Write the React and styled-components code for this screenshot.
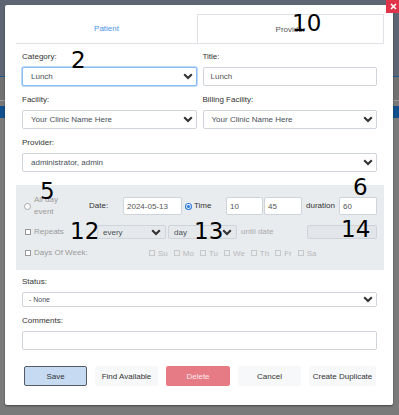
import styled, { createGlobalStyle } from 'styled-components'

const GlobalStyle = createGlobalStyle`
  html, body {
    margin: 0;
    padding: 0;
    height: 415px;
    overflow: hidden;
  }
  body {
    font-family: "Liberation Sans", Arial, sans-serif;
    background: linear-gradient(to bottom, #5f6673 0, #5f6673 76px, #1a5596 76px, #1a5596 77px, #717171 77px, #717171 100px, #999 100px, #999 101px, #777 101px, #777 106px, #134f8d 106px, #134f8d 118px, #7a7a7a 118px);
  }
`

const Page = styled.div`
  position: relative;
  width: 399px;
  height: 415px;
  padding: 5px 0 0 5px;
  box-sizing: border-box;
`

const Modal = styled.div`
  position: relative;
  width: 388px;
  height: 400px;
  background: #fff;
  border-radius: 2px;
  box-shadow: 0 1px 2px rgba(0, 0, 0, 0.45);
  padding: 9px 9px 0 11px;
  box-sizing: border-box;
`

const CloseButton = styled.div`
  position: absolute;
  top: -6px;
  right: -7px;
  width: 14px;
  height: 14px;
  background: #e0344b;
  display: flex;
  align-items: center;
  justify-content: center;
`

const Tabs = styled.div`
  display: grid;
  grid-template-columns: 181px 1fr;
  height: 30px;
  border-bottom: 1px solid #dee2e6;
  box-sizing: border-box;
`

const Tab = styled.div`
  display: flex;
  align-items: center;
  justify-content: center;
  font-size: 8px;
  color: ${(p) => (p.$active ? '#4d94ea' : '#555')};
  border: ${(p) => (p.$boxed ? '1px solid #dee2e6' : 'none')};
  border-bottom: none;
`

const Section = styled.div`
  padding: ${(p) => p.$pad || '7px 7px 0 6px'};
`

const Columns = styled.div`
  display: grid;
  grid-template-columns: 1fr 1fr;
  column-gap: 6px;
`

const Field = styled.div`
  margin-bottom: ${(p) => (p.$last ? '0' : '8px')};
`

const Label = styled.div`
  font-size: 8px;
  line-height: 12px;
  color: #333;
  margin-bottom: 4px;
`

const SelectBox = styled.div`
  height: ${(p) => p.$h || 19}px;
  width: ${(p) => (p.$w ? `${p.$w}px` : 'auto')};
  flex-shrink: 0;
  box-sizing: border-box;
  display: flex;
  align-items: center;
  justify-content: space-between;
  padding: 0 ${(p) => p.$pr ?? 3}px 0 ${(p) => p.$pl ?? 8}px;
  border: 1px solid ${(p) => (p.$focus ? '#86bdf5' : '#ced4da')};
  box-shadow: ${(p) => (p.$focus ? '0 0 0 1px rgba(80, 150, 230, 0.35)' : 'none')};
  border-radius: 2px;
  background: ${(p) => p.$bg || '#fff'};
  font-size: ${(p) => p.$fs || 8}px;
  color: #495057;
  margin-left: ${(p) => p.$ml || 0}px;
`

const TextBox = styled.div`
  height: ${(p) => p.$h || 19}px;
  width: ${(p) => (p.$w ? `${p.$w}px` : 'auto')};
  flex-shrink: 0;
  box-sizing: border-box;
  display: flex;
  align-items: center;
  padding-left: ${(p) => p.$pl ?? 7}px;
  border: 1px solid #ced4da;
  border-radius: 2px;
  background: ${(p) => p.$bg || '#fff'};
  font-size: 8px;
  color: #555;
  margin-left: ${(p) => p.$ml || 0}px;
`

const Panel = styled.div`
  margin-top: 13px;
  height: 85px;
  background: #e9ecef;
  padding: 12px 7px 0 8px;
  box-sizing: border-box;
`

const Row = styled.div`
  display: flex;
  align-items: center;
  height: ${(p) => p.$h}px;
  margin-top: ${(p) => p.$mt || 0}px;
`

const Group = styled.div`
  display: flex;
  align-items: center;
  width: ${(p) => p.$w}px;
  flex-shrink: 0;
  margin-left: ${(p) => p.$ml || 0}px;
`

const Text = styled.span`
  font-size: 8px;
  line-height: 12px;
  color: ${(p) => p.$color || '#333'};
  margin-left: ${(p) => p.$ml || 0}px;
`

const Radio = styled.span`
  width: 5px;
  height: 5px;
  border: 1px solid #a8a8a8;
  border-radius: 50%;
  background: #fff;
  flex-shrink: 0;
`

const Check = styled.span`
  width: 4px;
  height: 4px;
  border: 1px solid ${(p) => (p.$light ? '#c8c8c8' : '#9a9a9a')};
  background: ${(p) => (p.$light ? 'transparent' : '#fff')};
  flex-shrink: 0;
  margin-left: ${(p) => p.$ml || 0}px;
`

const Weekdays = styled.div`
  display: flex;
  align-items: center;
  gap: 6px;
`

const Day = styled.div`
  display: flex;
  align-items: center;
  gap: 3px;
  font-size: 8px;
  color: #b8b8b8;
`

const Buttons = styled.div`
  display: flex;
  gap: 8px;
  margin-top: 16px;
  padding-left: 2px;
`

const Button = styled.div`
  width: ${(p) => p.$w || 63}px;
  height: 20px;
  box-sizing: border-box;
  display: flex;
  align-items: center;
  justify-content: center;
  font-size: 8px;
  border-radius: 2px;
  color: ${(p) => (p.$variant === 'danger' ? '#fbe9eb' : '#333')};
  background: ${(p) =>
    p.$variant === 'primary' ? '#c6daf2' : p.$variant === 'danger' ? '#e67b85' : '#f7f8f9'};
  border: 1px solid ${(p) =>
    p.$variant === 'primary' ? '#565c64' : p.$variant === 'danger' ? '#e67b85' : '#f7f8f9'};
`

const Marker = styled.div`
  position: absolute;
  left: ${(p) => p.$x}px;
  top: ${(p) => p.$y}px;
  font-family: "DejaVu Sans", sans-serif;
  font-size: 23px;
  line-height: 1;
  color: #000;
  pointer-events: none;
`

const Chevron = () => (
  <svg width="10" height="7" viewBox="0 0 10 7">
    <polyline points="1.2,1.2 5,5 8.8,1.2" fill="none" stroke="#333" strokeWidth="2.1" />
  </svg>
)

const CheckedRadio = () => (
  <svg width="7" height="7" viewBox="0 0 7 7" style={{ marginLeft: 3, flexShrink: 0 }}>
    <circle cx="3.5" cy="3.5" r="3.5" fill="#2f7de1" />
    <circle cx="3.5" cy="3.5" r="2.4" fill="#fff" />
    <circle cx="3.5" cy="3.5" r="1.6" fill="#2f7de1" />
  </svg>
)

const days = ['Su', 'Mo', 'Tu', 'We', 'Th', 'Fr', 'Sa']

const markers = [
  { t: '10', x: 292, y: 12 },
  { t: '2', x: 71, y: 49 },
  { t: '5', x: 40, y: 180 },
  { t: '6', x: 353, y: 176 },
  { t: '12', x: 70, y: 220 },
  { t: '13', x: 194, y: 220 },
  { t: '14', x: 341, y: 218 },
]

export default function App() {
  return (
    <Page>
      <GlobalStyle />
      <Modal>
        <CloseButton>
          <svg width="7" height="7" viewBox="0 0 7 7">
            <path d="M1 1 L6 6 M6 1 L1 6" stroke="#fff" strokeWidth="1.6" />
          </svg>
        </CloseButton>

        <Tabs>
          <Tab $active>Patient</Tab>
          <Tab $boxed>Provider</Tab>
        </Tabs>

        <Section>
          <Columns>
            <Field>
              <Label>Category:</Label>
              <SelectBox $focus>
                Lunch
                <Chevron />
              </SelectBox>
            </Field>
            <Field>
              <Label>Title:</Label>
              <TextBox>Lunch</TextBox>
            </Field>
            <Field>
              <Label>Facility:</Label>
              <SelectBox>
                Your Clinic Name Here
                <Chevron />
              </SelectBox>
            </Field>
            <Field>
              <Label>Billing Facility:</Label>
              <SelectBox>
                Your Clinic Name Here
                <Chevron />
              </SelectBox>
            </Field>
          </Columns>
          <Field $last>
            <Label>Provider:</Label>
            <SelectBox>
              administrator, admin
              <Chevron />
            </SelectBox>
          </Field>
        </Section>

        <Panel>
          <Row $h={18}>
            <Group $w={65}>
              <Radio />
              <Text $color="#9a9a9a" $ml={3}>
                All day
                <br />
                event
              </Text>
            </Group>
            <Group $w={34}>
              <Text>Date:</Text>
            </Group>
            <TextBox $w={59} $h={18} $pl={3}>2024-05-13</TextBox>
            <Group $w={44}>
              <CheckedRadio />
              <Text $ml={2}>Time</Text>
            </Group>
            <TextBox $w={37} $h={18} $pl={3}>10</TextBox>
            <TextBox $w={38} $h={18} $pl={3} $ml={1}>45</TextBox>
            <Group $w={33} $ml={4}>
              <Text>duration</Text>
            </Group>
            <TextBox $w={38} $h={18} $pl={3}>60</TextBox>
          </Row>

          <Row $h={14} $mt={10}>
            <Group $w={73}>
              <Check $ml={1} />
              <Text $color="#9a9a9a" $ml={3}>Repeats</Text>
            </Group>
            <SelectBox $w={69} $h={14} $bg="#e6e9ec" $pl={5} $pr={4}>
              every
              <Chevron />
            </SelectBox>
            <SelectBox $w={69} $h={14} $bg="#e6e9ec" $pl={5} $pr={4} $ml={2}>
              day
              <Chevron />
            </SelectBox>
            <Group $w={66} $ml={4}>
              <Text $color="#aaa">until date</Text>
            </Group>
            <TextBox $w={70} $h={14} $bg="#e3e6e9" />
          </Row>

          <Row $h={12} $mt={8}>
            <Group $w={125}>
              <Check $ml={1} />
              <Text $color="#9a9a9a" $ml={3}>Days Of Week:</Text>
            </Group>
            <Weekdays>
              {days.map((d) => (
                <Day key={d}>
                  <Check $light />
                  {d}
                </Day>
              ))}
            </Weekdays>
          </Row>
        </Panel>

        <Section $pad="6px 7px 0 6px">
          <Field>
            <Label>Status:</Label>
            <SelectBox $h={15} $fs={7} $pl={6}>
              - None
              <Chevron />
            </SelectBox>
          </Field>
          <Field $last>
            <Label>Comments:</Label>
            <TextBox />
          </Field>
          <Buttons>
            <Button $variant="primary">Save</Button>
            <Button>Find Available</Button>
            <Button $variant="danger" $w={64}>Delete</Button>
            <Button>Cancel</Button>
            <Button $w={67}>Create Duplicate</Button>
          </Buttons>
        </Section>
      </Modal>

      {markers.map((m) => (
        <Marker key={m.t} $x={m.x} $y={m.y}>
          {m.t}
        </Marker>
      ))}
    </Page>
  )
}
